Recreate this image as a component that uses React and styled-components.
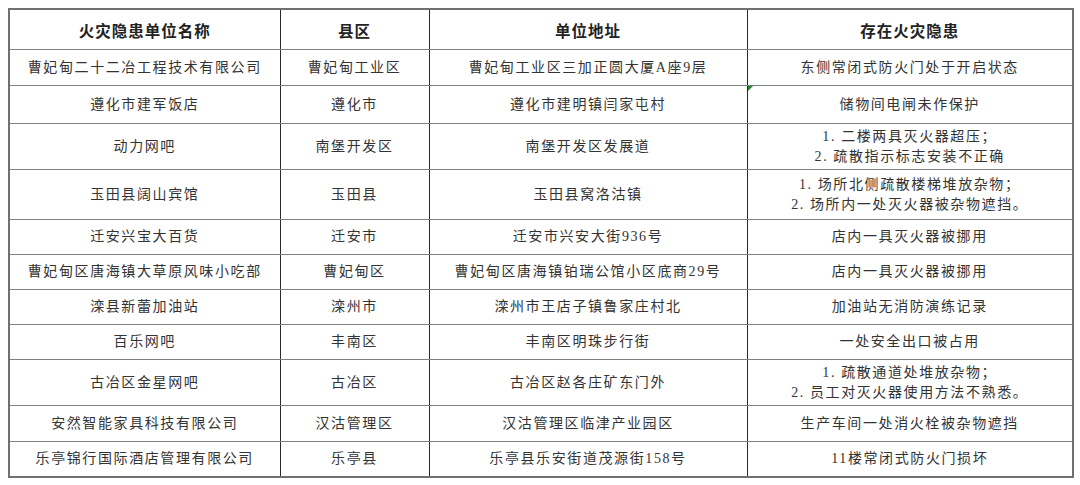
import React from 'react';
import styled, { createGlobalStyle } from 'styled-components';

const GlobalStyle = createGlobalStyle`
  html, body {
    margin: 0;
    padding: 0;
    background: #fff;
  }
`;

const Page = styled.div`
  padding: 8px 0 0 8px;
`;

const Table = styled.table`
  width: 1064px;
  border-collapse: collapse;
  table-layout: fixed;
  border: 2px solid #707070;
`;

const HeadCell = styled.th`
  height: ${(p) => p.$h}px;
  padding: 0;
  border-top: 1.5px solid #808080;
  border-bottom: 1.5px solid #808080;
  border-left: 1px solid #2a2a2a;
  border-right: 1px solid #2a2a2a;
  font-family: "Noto Sans CJK SC", "Noto Sans", sans-serif;
  font-weight: 700;
  font-size: 15.5px;
  letter-spacing: 1px;
  color: #222;
  text-align: center;
  vertical-align: middle;
`;

const Cell = styled.td`
  position: relative;
  height: ${(p) => p.$h}px;
  padding: 0;
  border-top: 1.5px solid #808080;
  border-bottom: 1.5px solid #808080;
  border-left: 1px solid #2a2a2a;
  border-right: 1px solid #2a2a2a;
  font-family: "Liberation Serif", "Noto Sans CJK SC", serif;
  font-size: 14px;
  letter-spacing: 1.6px;
  line-height: 20px;
  color: #333;
  text-align: center;
  vertical-align: middle;
`;

const CommentMark = styled.span`
  position: absolute;
  left: 0;
  top: 0;
  width: 0;
  height: 0;
  border-top: 5px solid #1a8a2a;
  border-right: 5px solid transparent;
`;

const cols = [271, 149, 318, 326];

const rows = [
  { h: 35, cells: ['曹妃甸二十二冶工程技术有限公司', '曹妃甸工业区', '曹妃甸工业区三加正圆大厦A座9层', '东侧常闭式防火门处于开启状态'] },
  { h: 37, cells: ['遵化市建军饭店', '遵化市', '遵化市建明镇闫家屯村', '储物间电闸未作保护'], mark: true },
  { h: 45, cells: ['动力网吧', '南堡开发区', '南堡开发区发展道', ['1. 二楼两具灭火器超压；', '2. 疏散指示标志安装不正确']] },
  { h: 49, cells: ['玉田县阔山宾馆', '玉田县', '玉田县窝洛沽镇', ['1. 场所北侧疏散楼梯堆放杂物；', '2. 场所内一处灭火器被杂物遮挡。']] },
  { h: 34, cells: ['迁安兴宝大百货', '迁安市', '迁安市兴安大街936号', '店内一具灭火器被挪用'] },
  { h: 34, cells: ['曹妃甸区唐海镇大草原风味小吃部', '曹妃甸区', '曹妃甸区唐海镇铂瑞公馆小区底商29号', '店内一具灭火器被挪用'] },
  { h: 34, cells: ['滦县新蕾加油站', '滦州市', '滦州市王店子镇鲁家庄村北', '加油站无消防演练记录'] },
  { h: 34, cells: ['百乐网吧', '丰南区', '丰南区明珠步行街', '一处安全出口被占用'] },
  { h: 45, cells: ['古冶区金星网吧', '古冶区', '古冶区赵各庄矿东门外', ['1. 疏散通道处堆放杂物；', '2. 员工对灭火器使用方法不熟悉。']] },
  { h: 35, cells: ['安然智能家具科技有限公司', '汉沽管理区', '汉沽管理区临津产业园区', '生产车间一处消火栓被杂物遮挡'] },
  { h: 34, cells: ['乐亭锦行国际酒店管理有限公司', '乐亭县', '乐亭县乐安街道茂源街158号', '11楼常闭式防火门损坏'] },
];

const headers = ['火灾隐患单位名称', '县区', '单位地址', '存在火灾隐患'];

function renderContent(c) {
  if (Array.isArray(c)) {
    return c.map((line, i) => (
      <React.Fragment key={i}>
        {i > 0 && <br />}
        {line}
      </React.Fragment>
    ));
  }
  return c;
}

export default function App() {
  return (
    <>
      <GlobalStyle />
      <Page>
        <Table>
          <colgroup>
            {cols.map((w, i) => (
              <col key={i} style={{ width: w }} />
            ))}
          </colgroup>
          <thead>
            <tr>
              {headers.map((h) => (
                <HeadCell key={h} $h={39}>{h}</HeadCell>
              ))}
            </tr>
          </thead>
          <tbody>
            {rows.map((r, ri) => (
              <tr key={ri}>
                {r.cells.map((c, ci) => (
                  <Cell key={ci} $h={r.h}>
                    {r.mark && ci === 3 && <CommentMark />}
                    {renderContent(c)}
                  </Cell>
                ))}
              </tr>
            ))}
          </tbody>
        </Table>
      </Page>
    </>
  );
}
